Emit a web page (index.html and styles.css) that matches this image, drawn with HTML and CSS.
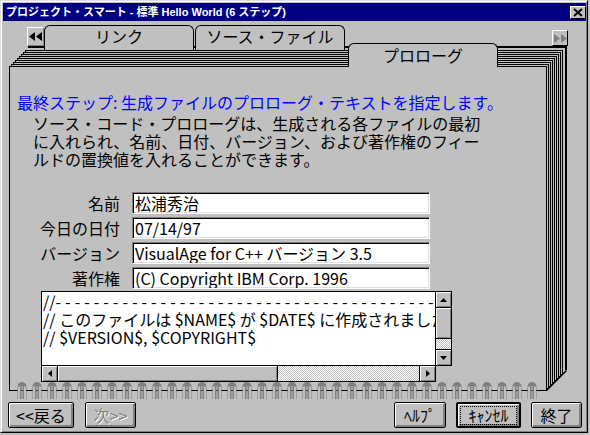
FILE: index.html
```html
<!DOCTYPE html>
<html lang="ja">
<head>
    <meta charset="UTF-8">
    <title>プロジェクト・スマート</title>
    <link rel="stylesheet" href="styles.css">
</head>
<body>
    <div class="window">
        <div class="titlebar">
            <span class="title">プロジェクト・スマート - 標準 Hello World (6 ステップ)</span>
            <span class="close">
                <svg width="10" height="9" viewBox="0 0 10 9"><path d="M1 1 L9 8 M9 1 L1 8" stroke="#000" stroke-width="2"/></svg>
            </span>
        </div>

        <div class="notebook">
            <!-- stacked pages, cover and spiral drawn behind the page content -->
            <svg class="pages" width="590" height="435" viewBox="0 0 590 435">
                <defs>
                    <pattern id="ring" x="17" y="382" width="15" height="17" patternUnits="userSpaceOnUse">
                        <path d="M2.5 17 V4.5 A2.5 2.5 0 0 1 7.5 4.5 V17" fill="none" stroke="#808080" stroke-width="4"/>
                        <path d="M2 17 V4.5 M8 17 V4.5" fill="none" stroke="#fff" stroke-width="1"/>
                    </pattern>
                </defs>
                <polyline points="28,47 566,47 566,370" fill="none" stroke="#000" stroke-width="2"/>
                <g fill="#c0c0c0" stroke="#000">
                    <rect x="25.5" y="50.5" width="537" height="324"/>
                    <rect x="23.5" y="52.5" width="537" height="324"/>
                    <rect x="21.5" y="54.5" width="537" height="324"/>
                    <rect x="19.5" y="56.5" width="537" height="324"/>
                    <rect x="17.5" y="58.5" width="537" height="324"/>
                    <rect x="15.5" y="60.5" width="537" height="324"/>
                    <rect x="13.5" y="62.5" width="537" height="324"/>
                    <rect x="11.5" y="64.5" width="537" height="324"/>
                    <rect x="9.5" y="66.5" width="537" height="324"/>
                </g>
                <line x1="546.5" y1="390.5" x2="566.5" y2="370.5" stroke="#000" stroke-width="1.5"/>
                <rect x="17" y="382" width="525" height="17" fill="url(#ring)"/>
            </svg>

            <div class="tabs">
                <div class="tab-arrow back">
                    <svg width="14" height="9" viewBox="0 0 14 9"><path d="M0 4.5 L6 0 V9 Z M7 4.5 L13 0 V9 Z" fill="#000"/></svg>
                </div>
                <div class="tab">リンク</div>
                <div class="tab second">ソース・ファイル</div>
                <div class="tab active">プロローグ</div>
                <div class="tab-arrow next">
                    <svg width="13" height="9" viewBox="0 0 13 9"><path d="M0 0 L6 4.5 L0 9 Z M7 0 L13 4.5 L7 9 Z" fill="#808080"/></svg>
                </div>
            </div>

            <div class="page">
                <p class="step-title">最終ステップ: 生成ファイルのプロローグ・テキストを指定します。</p>
                <p class="step-text">ソース・コード・プロローグは、生成される各ファイルの最初<br>に入れられ、名前、日付、バージョン、および著作権のフィー<br>ルドの置換値を入れることができます。</p>

                <div class="fields">
                    <label for="name">名前</label>
                    <input type="text" id="name" value="松浦秀治">
                    <label for="date">今日の日付</label>
                    <input type="text" id="date" value="07/14/97">
                    <label for="version">バージョン</label>
                    <input type="text" id="version" value="VisualAge for C++ バージョン 3.5">
                    <label for="copyright">著作権</label>
                    <input type="text" id="copyright" value="(C) Copyright IBM Corp. 1996">
                </div>

                <div class="editor">
                    <div class="editor-text">//<span class="dashes">----------------------------------------</span>
// このファイルは $NAME$ が $DATE$ に作成されました。
// $VERSION$, $COPYRIGHT$</div>
                    <div class="vscroll">
                        <div class="sb-btn up"><svg width="7" height="4" viewBox="0 0 7 4"><path d="M0 4 L3.5 0 L7 4 Z"/></svg></div>
                        <div class="sb-thumb"></div>
                        <div class="sb-track"></div>
                        <div class="sb-btn down"><svg width="7" height="4" viewBox="0 0 7 4"><path d="M0 0 L3.5 4 L7 0 Z"/></svg></div>
                    </div>
                    <div class="hscroll">
                        <div class="sb-btn left"><svg width="4" height="7" viewBox="0 0 4 7"><path d="M4 0 L0 3.5 L4 7 Z"/></svg></div>
                        <div class="sb-thumb"></div>
                        <div class="sb-track"></div>
                        <div class="sb-btn right"><svg width="4" height="7" viewBox="0 0 4 7"><path d="M0 0 L4 3.5 L0 7 Z"/></svg></div>
                    </div>
                    <div class="corner"></div>
                </div>
            </div>
        </div>

        <div class="buttons">
            <div class="button-group">
                <button class="btn-back">&lt;&lt;戻る</button>
                <button class="btn-next" disabled>次&gt;&gt;</button>
            </div>
            <div class="button-group">
                <button class="btn-help">ﾍﾙﾌﾟ</button>
                <button class="btn-cancel default"><span class="focus">ｷｬﾝｾﾙ</span></button>
                <button class="btn-finish">終了</button>
            </div>
        </div>
    </div>
</body>
</html>
```

FILE: styles.css
```css
body {
    margin: 0;
    background-color: #c0c0c0;
    font-family: "Noto Sans CJK JP", sans-serif;
    font-size: 16px;
    color: #000;
}

.window {
    width: 588px;
    height: 433px;
    box-sizing: border-box;
    border: 1px solid;
    border-color: #dfdfdf #000 #000 #dfdfdf;
    box-shadow: inset 1px 1px #fff, inset -1px -1px #808080;
    padding: 2px 1px 2px 2px;
    background-color: #c0c0c0;
}

.titlebar {
    height: 18px;
    display: flex;
    align-items: center;
    justify-content: space-between;
    background-color: #000080;
    color: #fff;
}

.title {
    padding-left: 3px;
    font: bold 11px "Liberation Sans", "Noto Sans CJK JP", sans-serif;
    line-height: 18px;
}

.close {
    width: 16px;
    height: 13px;
    box-sizing: border-box;
    display: flex;
    align-items: center;
    justify-content: center;
    background-color: #c0c0c0;
    border: 1px solid;
    border-color: #fff #000 #000 #fff;
}

.notebook {
    position: relative;
    z-index: 0;
    height: 377px;
}

.pages {
    position: absolute;
    left: -3px;
    top: -21px;
    z-index: -1;
}

.tabs {
    display: flex;
    align-items: flex-start;
    height: 46px;
}

.tab-arrow {
    box-sizing: border-box;
    display: flex;
    align-items: center;
    justify-content: center;
    background-color: #c0c0c0;
    border: 1px solid;
    border-color: #fff #808080 #808080 #fff;
}

.tab-arrow.back {
    margin: 6px 0 0 24px;
    width: 17px;
    height: 19px;
}

.tab-arrow.next {
    margin: 9px 0 0 54px;
    width: 16px;
    height: 16px;
    border-color: #fff #000 #000 #fff;
}

.tab {
    margin-top: 4px;
    width: 150px;
    height: 25px;
    box-sizing: border-box;
    border: 1px solid #000;
    border-bottom: none;
    border-radius: 6px 6px 0 0;
    background-color: #c0c0c0;
    text-align: center;
    line-height: 20px;
}

.tab.second {
    margin-left: 1px;
}

.tab.active {
    margin-left: 3px;
    margin-top: 22px;
    height: 24px;
    line-height: 22px;
}

.page {
    padding: 26px 0 0 14px;
}

.step-title {
    margin: 0;
    color: #0000ff;
    line-height: 18px;
    white-space: nowrap;
}

.step-text {
    margin: 3px 0 0 16px;
    line-height: 18px;
    white-space: nowrap;
}

.fields {
    display: grid;
    grid-template-columns: 108px 298px;
    gap: 3px 12px;
    margin: 24px 0 0 -5px;
}

.fields label {
    text-align: right;
    line-height: 22px;
}

.fields input {
    height: 22px;
    box-sizing: border-box;
    margin: 0;
    padding: 0 2px;
    border: 1px solid;
    border-color: #808080 #fff #fff #808080;
    box-shadow: inset 1px 1px #000, inset -1px -1px #dfdfdf;
    background-color: #fff;
    font: 16px "Noto Sans CJK JP", sans-serif;
    color: #000;
    outline: none;
}

.editor {
    display: grid;
    grid-template-columns: 395px 16px;
    grid-template-rows: 75px 16px;
    margin: 2px 0 0 24px;
    width: 411px;
}

.editor-text {
    box-sizing: border-box;
    border: 1px solid #000;
    background-color: #fff;
    padding-left: 1px;
    overflow: hidden;
    white-space: pre;
    font: 16px "Noto Sans CJK JP", sans-serif;
    line-height: 18px;
}

.dashes {
    letter-spacing: 4px;
}

.vscroll {
    box-sizing: border-box;
    display: flex;
    flex-direction: column;
    border: 1px solid #000;
    border-left: none;
}

.hscroll {
    box-sizing: border-box;
    display: flex;
    border: 1px solid #000;
    border-top: none;
}

.sb-btn {
    flex: none;
    display: flex;
    align-items: center;
    justify-content: center;
    background-color: #c0c0c0;
    box-shadow: inset 1px 1px #fff, inset -1px -1px #808080;
}

.vscroll .sb-btn {
    height: 15px;
}

.hscroll .sb-btn {
    width: 15px;
}

.sb-btn.up {
    border-bottom: 1px solid #000;
}

.sb-btn.down {
    border-top: 1px solid #000;
}

.sb-btn.left {
    border-right: 1px solid #000;
}

.sb-btn.right {
    border-left: 1px solid #000;
}

.sb-thumb {
    flex: none;
    background-color: #c0c0c0;
    box-shadow: inset 1px 1px #fff, inset -1px -1px #808080;
}

.vscroll .sb-thumb {
    height: 30px;
    border-bottom: 1px solid #000;
}

.hscroll .sb-thumb {
    width: 219px;
    border-right: 1px solid #000;
}

.sb-track {
    flex: 1;
    background: repeating-conic-gradient(#fff 0 25%, #c0c0c0 0 50%) 0 0 / 2px 2px;
}

.buttons {
    display: flex;
    justify-content: space-between;
    margin-top: 4px;
    padding: 0 4px 0 5px;
}

.button-group {
    display: flex;
    gap: 10px;
}

.button-group:first-child {
    gap: 11px;
}

.buttons button {
    height: 26px;
    box-sizing: border-box;
    padding: 0;
    border: 1px solid #000;
    border-radius: 2px;
    background-color: #c0c0c0;
    box-shadow: inset 1px 1px #fff, inset -2px -2px #808080;
    font: 16px "Noto Sans CJK JP", sans-serif;
    line-height: 22px;
    color: #000;
}

.buttons button:disabled {
    color: #808080;
    text-shadow: 1px 1px #fff;
}

.buttons button.default {
    border-width: 2px;
}

.focus {
    display: inline-block;
    width: 55px;
    line-height: 17px;
    outline: 1px dotted #000;
}

.btn-back {
    width: 66px;
}

.btn-next {
    width: 51px;
}

.btn-help {
    width: 52px;
}

.btn-cancel {
    width: 65px;
}

.btn-finish {
    width: 51px;
}
```
